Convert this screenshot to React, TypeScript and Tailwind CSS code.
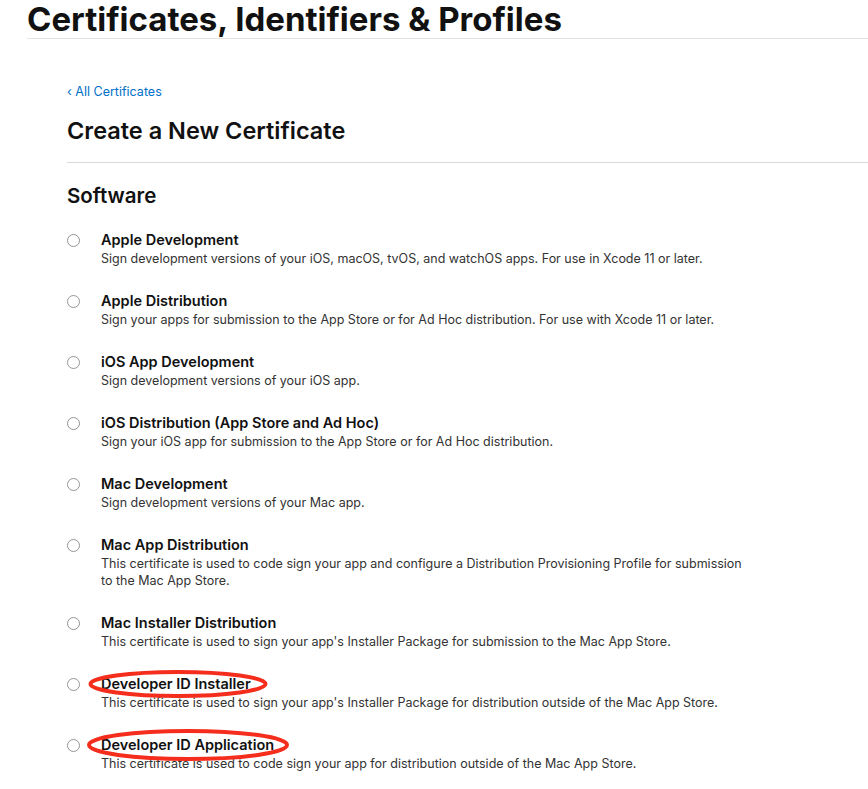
import React from "react";

const items = [
  { t: "Apple Development", d: "Sign development versions of your iOS, macOS, tvOS, and watchOS apps. For use in Xcode 11 or later." },
  { t: "Apple Distribution", d: "Sign your apps for submission to the App Store or for Ad Hoc distribution. For use with Xcode 11 or later." },
  { t: "iOS App Development", d: "Sign development versions of your iOS app." },
  { t: "iOS Distribution (App Store and Ad Hoc)", d: "Sign your iOS app for submission to the App Store or for Ad Hoc distribution." },
  { t: "Mac Development", d: "Sign development versions of your Mac app." },
  { t: "Mac App Distribution", d: "This certificate is used to code sign your app and configure a Distribution Provisioning Profile for submission to the Mac App Store." },
  { t: "Mac Installer Distribution", d: "This certificate is used to sign your app's Installer Package for submission to the Mac App Store." },
  { t: "Developer ID Installer", d: "This certificate is used to sign your app's Installer Package for distribution outside of the Mac App Store.", ring: "a" },
  { t: "Developer ID Application", d: "This certificate is used to code sign your app for distribution outside of the Mac App Store.", ring: "b" },
];

export default function App() {
  return (
    <div className="min-h-screen bg-white text-[#111] font-['Inter','Liberation_Sans',sans-serif] overflow-hidden">
      <div className="pl-[27px]">
        <h1 className="text-[33px] leading-[38px] font-bold text-[#111]">Certificates, Identifiers &amp; Profiles</h1>
        <div className="h-px bg-[#e3e3e3]" />
      </div>
      <div className="pl-[67px] pt-[45px]">
        <a className="text-[12.5px] leading-[16px] text-[#0070c9] block">‹ All Certificates</a>
        <h2 className="mt-[16px] text-[23.5px] leading-[30px] font-semibold text-[#111]">Create a New Certificate</h2>
        <div className="mt-[16px] h-px bg-[#d9d9d9]" />
        <h3 className="mt-[20px] text-[20.5px] leading-[26px] font-semibold text-[#111]">Software</h3>
        <div className="mt-[21px] flex flex-col gap-[24px]">
          {items.map((it) => (
            <div key={it.t} className="flex relative">
              <div className="w-[34px] shrink-0 pt-[4px]">
                <div className="w-[13px] h-[13px] rounded-full border border-[#959595] bg-white" />
              </div>
              <div className="max-w-[650px]">
                <div className="text-[14.5px] leading-[20px] font-semibold text-[#111]">{it.t}</div>
                <div className="text-[12.5px] leading-[17px] text-[#333]">{it.d}</div>
              </div>
              {it.ring === "a" && (
                <svg className="absolute left-[20px] top-[-6px] pointer-events-none" width="182" height="32" viewBox="0 0 182 32">
                  <ellipse cx="91" cy="16" rx="87.5" ry="12" fill="none" stroke="#f42d1c" strokeWidth="4" />
                </svg>
              )}
              {it.ring === "b" && (
                <svg className="absolute left-[18px] top-[-8px] pointer-events-none" width="206" height="36" viewBox="0 0 206 36">
                  <ellipse cx="103" cy="18" rx="99" ry="14" fill="none" stroke="#f42d1c" strokeWidth="4" />
                </svg>
              )}
            </div>
          ))}
        </div>
      </div>
    </div>
  );
}
